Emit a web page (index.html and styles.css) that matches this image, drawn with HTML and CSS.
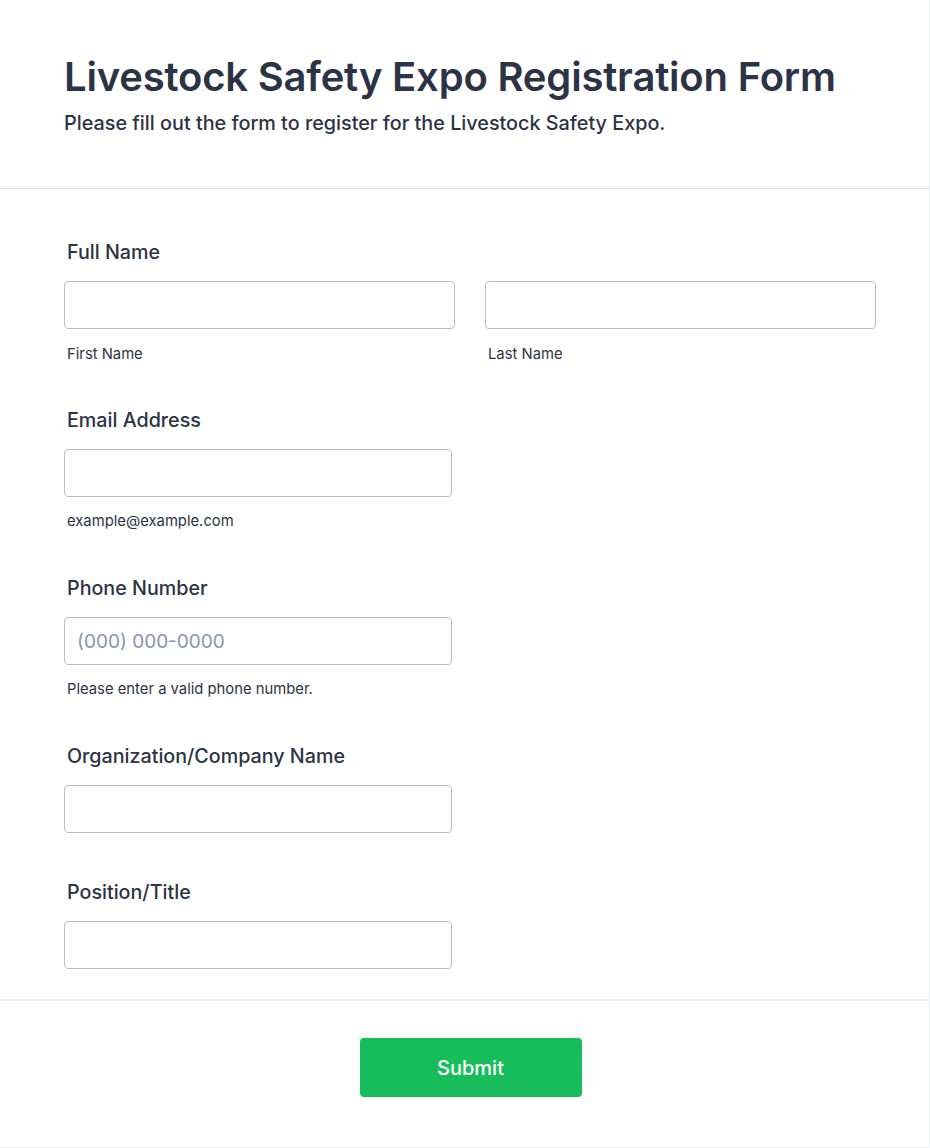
FILE: index.html
```html
<!DOCTYPE html>
<html lang="en">
<head>
<meta charset="utf-8">
<title>Livestock Safety Expo Registration Form</title>
<link rel="stylesheet" href="styles.css">
</head>
<body>
<div class="card">
  <header class="header">
    <h1 class="title">Livestock Safety Expo Registration Form</h1>
    <p class="subtitle">Please fill out the form to register for the Livestock Safety Expo.</p>
  </header>
  <form class="form">
    <div class="field field-row">
      <label class="label">Full Name</label>
      <div class="row">
        <div class="col">
          <input class="input input-name" type="text">
          <span class="sublabel sublabel-row">First Name</span>
        </div>
        <div class="col">
          <input class="input input-name" type="text">
          <span class="sublabel sublabel-row">Last Name</span>
        </div>
      </div>
    </div>
    <div class="field">
      <label class="label">Email Address</label>
      <input class="input" type="email">
      <span class="sublabel">example@example.com</span>
    </div>
    <div class="field">
      <label class="label">Phone Number</label>
      <input class="input" type="tel" placeholder="(000) 000-0000">
      <span class="sublabel">Please enter a valid phone number.</span>
    </div>
    <div class="field field-plain">
      <label class="label">Organization/Company Name</label>
      <input class="input" type="text">
    </div>
    <div class="field field-last">
      <label class="label">Position/Title</label>
      <input class="input" type="text">
    </div>
  </form>
  <div class="footer">
    <button class="submit" type="button">Submit</button>
  </div>
</div>
</body>
</html>
```
FILE: styles.css
```css
* { box-sizing: border-box; }
html, body {
  margin: 0;
  padding: 0;
  background: #ffffff;
}
body {
  font-family: Inter, "Noto Sans", sans-serif;
  color: #2c3345;
}
.card {
  width: 930px;
  background: #ffffff;
  border-right: 1px solid #e9eaf2;
  border-bottom: 1px solid #e9eaf2;
}
.header {
  padding: 54px 64px 53px;
  border-bottom: 1px solid #d8dae9;
}
.title {
  margin: 0;
  font-size: 40px;
  line-height: 46px;
  font-weight: 600;
  color: #2c3345;
  letter-spacing: -0.2px;
}
.subtitle {
  margin: 11px 0 0;
  font-size: 19.8px;
  line-height: 24px;
  font-weight: 500;
  color: #2c3345;
}
.form {
  padding: 51px 64px 30px;
  border-bottom: 2px solid #eef0f8;
}
.field {
  display: flex;
  flex-direction: column;
  margin-bottom: 46px;
}
.field-row { margin-bottom: 45px; }
.field-plain { margin-bottom: 47px; }
.field-last { margin-bottom: 0; }
.label {
  display: block;
  padding-left: 3px;
  font-size: 19.7px;
  line-height: 24px;
  height: 24px;
  font-weight: 500;
  margin-bottom: 17px;
}
.row {
  display: flex;
  gap: 30px;
}
.col {
  display: flex;
  flex-direction: column;
}
.input {
  display: block;
  width: 388px;
  height: 48px;
  flex: none;
  border: 1px solid #b8bdc9;
  border-radius: 4px;
  background: #ffffff;
  padding: 0 12px;
  font-family: Inter, "Noto Sans", sans-serif;
  font-size: 19px;
  color: #2c3345;
}
.input-name { width: 391px; }
.input::placeholder { color: #8894ab; }
.sublabel {
  display: block;
  margin-top: 15px;
  padding-left: 3px;
  font-size: 14.8px;
  line-height: 18px;
  height: 18px;
  color: #2c3345;
}
.sublabel-row { margin-top: 16px; }
.footer {
  display: flex;
  justify-content: center;
  padding: 37px 0 50px 12px;
}
.submit {
  width: 222px;
  height: 59px;
  border: none;
  border-radius: 4px;
  background: #18bd5b;
  color: #ffffff;
  font-family: Inter, "Noto Sans", sans-serif;
  font-size: 20px;
  font-weight: 500;
}
```
